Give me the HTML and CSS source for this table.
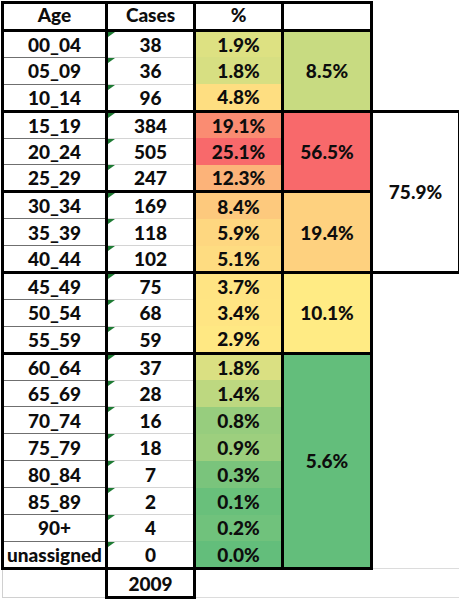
FILE: index.html
```html
<!DOCTYPE html>
<html>
<head>
    <link rel="stylesheet" href="styles.css">
</head>
<body>
    <table class="sheet">
        <colgroup>
            <col class="col-age">
            <col class="col-cases">
            <col class="col-pct">
            <col class="col-grp">
            <col class="col-big">
        </colgroup>
        <thead>
            <tr>
                <th class="age">Age</th>
                <th class="cases">Cases</th>
                <th class="pct">%</th>
                <th class="grp"></th>
                <th class="big"></th>
            </tr>
        </thead>
        <tbody>
            <!-- 0 - 14 -->
            <tr class="band-top">
                <td class="age">00_04</td>
                <td class="cases"><span class="flag"></span>38</td>
                <td class="pct" style="background-color: #dde182;">1.9%</td>
                <td class="grp" rowspan="3" style="background-color: #c8db81;">8.5%</td>
                <td class="big" rowspan="3"></td>
            </tr>
            <tr>
                <td class="age">05_09</td>
                <td class="cases"><span class="flag"></span>36</td>
                <td class="pct" style="background-color: #d7df82;">1.8%</td>
            </tr>
            <tr class="band-end">
                <td class="age">10_14</td>
                <td class="cases"><span class="flag"></span>96</td>
                <td class="pct" style="background-color: #fede81;">4.8%</td>
            </tr>

            <!-- 15 - 29 -->
            <tr class="band-top">
                <td class="age">15_19</td>
                <td class="cases"><span class="flag"></span>384</td>
                <td class="pct" style="background-color: #fa8c72;">19.1%</td>
                <td class="grp" rowspan="3" style="background-color: #f8696b;">56.5%</td>
                <td class="big total-box" rowspan="6">75.9%</td>
            </tr>
            <tr>
                <td class="age">20_24</td>
                <td class="cases"><span class="flag"></span>505</td>
                <td class="pct" style="background-color: #f8696b;">25.1%</td>
            </tr>
            <tr class="band-end">
                <td class="age">25_29</td>
                <td class="cases"><span class="flag"></span>247</td>
                <td class="pct" style="background-color: #fcb379;">12.3%</td>
            </tr>

            <!-- 30 - 44 -->
            <tr class="band-top">
                <td class="age">30_34</td>
                <td class="cases"><span class="flag"></span>169</td>
                <td class="pct" style="background-color: #fdc97d;">8.4%</td>
                <td class="grp" rowspan="3" style="background-color: #fed17f;">19.4%</td>
            </tr>
            <tr>
                <td class="age">35_39</td>
                <td class="cases"><span class="flag"></span>118</td>
                <td class="pct" style="background-color: #fed780;">5.9%</td>
            </tr>
            <tr class="band-end">
                <td class="age">40_44</td>
                <td class="cases"><span class="flag"></span>102</td>
                <td class="pct" style="background-color: #fedc81;">5.1%</td>
            </tr>

            <!-- 45 - 59 -->
            <tr class="band-top">
                <td class="age">45_49</td>
                <td class="cases"><span class="flag"></span>75</td>
                <td class="pct" style="background-color: #ffe483;">3.7%</td>
                <td class="grp" rowspan="3" style="background-color: #ffeb84;">10.1%</td>
                <td class="big" rowspan="11"></td>
            </tr>
            <tr>
                <td class="age">50_54</td>
                <td class="cases"><span class="flag"></span>68</td>
                <td class="pct" style="background-color: #ffe583;">3.4%</td>
            </tr>
            <tr class="band-end">
                <td class="age">55_59</td>
                <td class="cases"><span class="flag"></span>59</td>
                <td class="pct" style="background-color: #ffe883;">2.9%</td>
            </tr>

            <!-- 60+ -->
            <tr class="band-top">
                <td class="age">60_64</td>
                <td class="cases"><span class="flag"></span>37</td>
                <td class="pct" style="background-color: #dae082;">1.8%</td>
                <td class="grp" rowspan="8" style="background-color: #63be7b;">5.6%</td>
            </tr>
            <tr>
                <td class="age">65_69</td>
                <td class="cases"><span class="flag"></span>28</td>
                <td class="pct" style="background-color: #bdd880;">1.4%</td>
            </tr>
            <tr>
                <td class="age">70_74</td>
                <td class="cases"><span class="flag"></span>16</td>
                <td class="pct" style="background-color: #97cd7e;">0.8%</td>
            </tr>
            <tr>
                <td class="age">75_79</td>
                <td class="cases"><span class="flag"></span>18</td>
                <td class="pct" style="background-color: #9dcf7e;">0.9%</td>
            </tr>
            <tr>
                <td class="age">80_84</td>
                <td class="cases"><span class="flag"></span>7</td>
                <td class="pct" style="background-color: #7ac47c;">0.3%</td>
            </tr>
            <tr>
                <td class="age">85_89</td>
                <td class="cases"><span class="flag"></span>2</td>
                <td class="pct" style="background-color: #69c07b;">0.1%</td>
            </tr>
            <tr>
                <td class="age">90+</td>
                <td class="cases"><span class="flag"></span>4</td>
                <td class="pct" style="background-color: #70c27c;">0.2%</td>
            </tr>
            <tr class="band-end">
                <td class="age">unassigned</td>
                <td class="cases"><span class="flag"></span>0</td>
                <td class="pct" style="background-color: #63be7b;">0.0%</td>
            </tr>
        </tbody>
        <tfoot>
            <tr>
                <td class="age"></td>
                <td class="cases">2009</td>
                <td class="pct"></td>
                <td class="grp"></td>
                <td class="big"></td>
            </tr>
        </tfoot>
    </table>
</body>
</html>
```

FILE: styles.css
```css
body {
    margin: 0;
    background-color: #fff;
    font-family: Lato, "Open Sans", sans-serif;
}

.sheet {
    border-collapse: collapse;
    table-layout: fixed;
    width: 457px;
    margin: 1px 0 0 1px;
    font-size: 19px;
    color: #0d0d0d;
}

.col-age { width: 104px; }
.col-cases { width: 88px; }
.col-pct { width: 88px; }
.col-grp { width: 89px; }
.col-big { width: 88px; }

th, td {
    padding: 0;
    text-align: center;
    vertical-align: middle;
    line-height: 1;
    font-weight: 900;
}

thead th {
    padding-bottom: 4px;
}

thead tr { height: 28px; }
tbody tr { height: 26.9px; }
tfoot tr { height: 29.5px; }

/* header */
thead th.age,
thead th.cases,
thead th.pct,
thead th.grp {
    border: 3px solid #000;
}

/* data columns */
.age {
    border-left: 3px solid #000;
    border-right: 3px solid #000;
    border-bottom: 1px solid #6f6f6f;
}

.cases {
    position: relative;
    border-left: 3px solid #000;
    border-right: 3px solid #000;
    border-bottom: 1px solid #d4d4d4;
}

.pct {
    border-left: 3px solid #000;
    border-right: 3px solid #000;
}

.grp {
    border: 3px solid #000;
}

.big {
    border-right: 1px solid #d0d0d0;
}

.band-top .age,
.band-top .cases,
.band-top .pct {
    border-top: 3px solid #000;
}

.band-end .age,
.band-end .cases,
.band-end .pct {
    border-bottom: 3px solid #000;
}

.sheet td.total-box {
    border: 3px solid #000;
}

/* "number stored as text" marker */
.flag {
    position: absolute;
    top: 0;
    left: 0;
    width: 0;
    height: 0;
    border-top: 5px solid #1e7b34;
    border-right: 7px solid transparent;
}

/* totals row */
tfoot td.age {
    border-left: 1px solid #d0d0d0;
    border-bottom: 1px solid #d0d0d0;
}

tfoot td.cases {
    border: 3px solid #000;
}

tfoot td.pct,
tfoot td.grp {
    border-left: none;
    border-right: none;
    border-bottom: 1px solid #dcdcdc;
}

tfoot td.big {
    border-top: 1px solid #dcdcdc;
    border-bottom: 1px solid #dcdcdc;
}
```
